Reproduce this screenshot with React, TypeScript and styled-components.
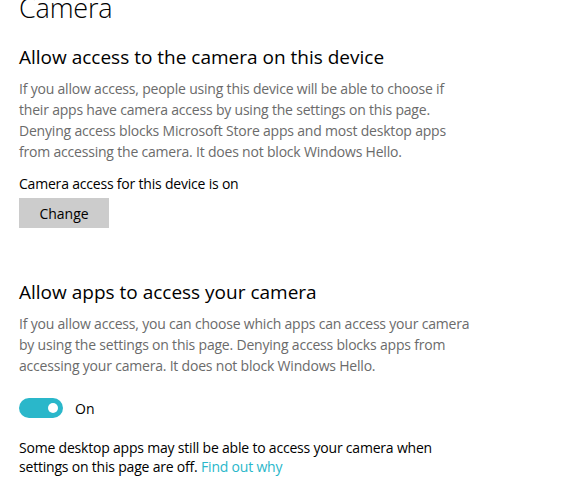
import styled, { createGlobalStyle } from 'styled-components'

const GlobalStyle = createGlobalStyle`
  html, body {
    margin: 0;
    padding: 0;
    background: #ffffff;
  }
  body {
    font-family: "Open Sans", "Noto Sans", "Liberation Sans", sans-serif;
    color: #000000;
    overflow: hidden;
  }
`

const Page = styled.main`
  display: flex;
  flex-direction: column;
  padding: 0 19px;
  width: 577px;
  height: 499px;
  box-sizing: border-box;
  overflow: hidden;
`

const Title = styled.h1`
  margin: -12px 0 0;
  font-size: 27px;
  font-weight: 300;
  line-height: 40px;
  letter-spacing: -0.2px;
`

const Section = styled.section<{ $top: number }>`
  display: flex;
  flex-direction: column;
  margin-top: ${p => p.$top}px;
`

const Heading = styled.h2`
  margin: 0;
  font-size: 19px;
  font-weight: 400;
  line-height: 26px;
  letter-spacing: 0;
`

const Body = styled.p<{ $muted?: boolean; $top?: number }>`
  margin: ${p => p.$top ?? 0}px 0 0;
  max-width: 456px;
  font-size: 14px;
  line-height: ${p => (p.$muted ? 21 : 19)}px;
  color: ${p => (p.$muted ? '#6b6b6b' : '#000000')};
  letter-spacing: -0.2px;
`

const Button = styled.button`
  margin-top: 5px;
  width: 90px;
  height: 30px;
  border: none;
  background: #cccccc;
  font-family: inherit;
  font-size: 14px;
  color: #000000;
  cursor: pointer;
`

const ToggleRow = styled.div`
  display: flex;
  align-items: center;
  gap: 12px;
  margin-top: 22px;
  font-size: 14px;
`

const Track = styled.span<{ $on: boolean }>`
  display: flex;
  align-items: center;
  justify-content: ${p => (p.$on ? 'flex-end' : 'flex-start')};
  width: 44px;
  height: 20px;
  padding: 0 5px;
  box-sizing: border-box;
  border-radius: 10px;
  background: ${p => (p.$on ? '#2ab7ca' : '#ffffff')};
`

const Knob = styled.span`
  width: 10px;
  height: 10px;
  border-radius: 50%;
  background: #ffffff;
`

const Link = styled.a`
  color: #2ab7ca;
  text-decoration: none;
`

export default function App() {
  return (
    <>
      <GlobalStyle />
      <Page>
        <Title>Camera</Title>
        <Section $top={16}>
          <Heading>Allow access to the camera on this device</Heading>
          <Body $muted $top={8}>
            If you allow access, people using this device will be able to choose if
            their apps have camera access by using the settings on this page.
            Denying access blocks Microsoft Store apps and most desktop apps
            from accessing the camera. It does not block Windows Hello.
          </Body>
          <Body $top={12}>Camera access for this device is on</Body>
          <div>
            <Button>Change</Button>
          </div>
        </Section>
        <Section $top={51}>
          <Heading>Allow apps to access your camera</Heading>
          <Body $muted $top={8}>
            If you allow access, you can choose which apps can access your camera
            by using the settings on this page. Denying access blocks apps from
            accessing your camera. It does not block Windows Hello.
          </Body>
          <ToggleRow>
            <Track $on>
              <Knob />
            </Track>
            <span>On</span>
          </ToggleRow>
          <Body $top={20}>
            Some desktop apps may still be able to access your camera when
            settings on this page are off. <Link href="#">Find out why</Link>
          </Body>
        </Section>
      </Page>
    </>
  )
}
